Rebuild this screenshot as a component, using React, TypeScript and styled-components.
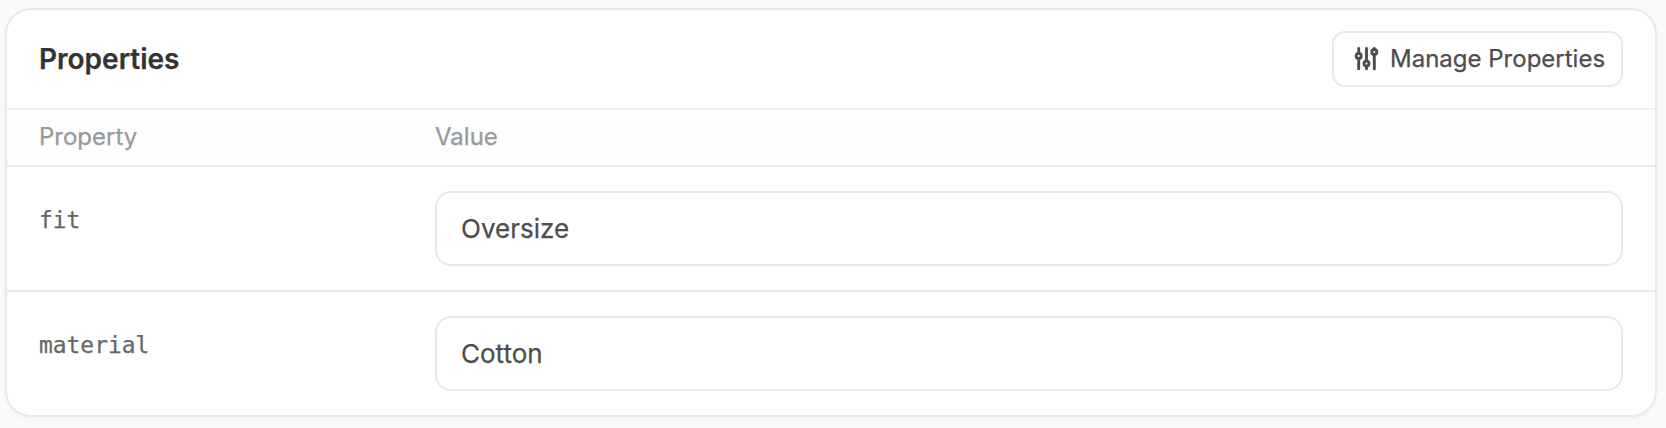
import React from "react";
import styled, { createGlobalStyle } from "styled-components";

const GlobalStyle = createGlobalStyle`
  *, *::before, *::after { box-sizing: border-box; }
  body {
    margin: 0;
    background: #fafafa;
    font-family: Inter, "Liberation Sans", sans-serif;
    -webkit-font-smoothing: antialiased;
    -webkit-text-stroke: 0.25px currentColor;
  }
`;

const Page = styled.main`
  height: 428px;
  padding: 8px 9px 11px 5px;
`;

const Card = styled.section`
  height: 409px;
  border: 2px solid #e9e9e9;
  border-radius: 26px;
  background: #fff;
  box-shadow: 0 2px 4px rgba(0, 0, 0, 0.03);
`;

const CardHeader = styled.header`
  display: flex;
  align-items: center;
  justify-content: space-between;
  height: 100px;
  padding: 0 32px;
  border-bottom: 2px solid #f2f2f2;
`;

const Title = styled.h2`
  margin: 0;
  font-size: 28px;
  line-height: 40px;
  font-weight: 600;
  color: #333;
`;

const Button = styled.button`
  display: flex;
  align-items: center;
  gap: 10px;
  width: 291px;
  height: 56px;
  margin-top: -1px;
  padding: 0 0 0 20px;
  border: 2px solid #e9e9e9;
  border-radius: 13px;
  background: #fff;
  color: #4d4d4d;
  font: 400 24px/32px Inter, sans-serif;
  white-space: nowrap;
`;

const Columns = styled.div`
  display: grid;
  grid-template-columns: 396px 1fr;
  padding: 0 32px;
`;

const TableHead = styled(Columns)`
  height: 57px;
  align-items: center;
  padding-bottom: 2px;
  border-bottom: 2px solid #e9e9e9;
  background:
    radial-gradient(circle at 24px 24px, #fdfdfd 24px, #fff 24.5px) 0 0 / 24px 24px no-repeat,
    radial-gradient(circle at 0 24px, #fdfdfd 24px, #fff 24.5px) 100% 0 / 24px 24px no-repeat,
    #fdfdfd;
`;

const HeadCell = styled.span`
  font-size: 24px;
  line-height: 32px;
  color: #999;
`;

const Row = styled(Columns)`
  padding-top: 24px;
  padding-bottom: 24px;

  & + & {
    border-top: 2px solid #e9e9e9;
  }
`;

const PropertyName = styled.span`
  padding-top: 13px;
  font: 400 22.9px/32px "DejaVu Sans Mono", monospace;
  color: #666;
`;

const ValueInput = styled.input`
  width: 100%;
  height: 75px;
  padding: 0 24px;
  border: 2px solid #e9e9e9;
  border-radius: 16px;
  outline: none;
  background: #fff;
  color: #4d4d4d;
  font: 400 26px/36px Inter, sans-serif;
`;

const SlidersIcon = () => (
  <svg width="26" height="26" viewBox="0 0 26 26" fill="none" stroke="currentColor" strokeWidth="2.9" strokeLinecap="round" aria-hidden="true">
    <path d="M4.7 2.5v4.6M4.7 12.7v10.2M12.5 2.5v12.3M12.5 20.4v2.5M20.3 2.5v.7M20.3 8.8v14.1" />
    <circle cx="4.7" cy="9.9" r="2.5" />
    <circle cx="12.5" cy="17.6" r="2.5" />
    <circle cx="20.3" cy="6" r="2.5" />
  </svg>
);

const properties = [
  { name: "fit", value: "Oversize" },
  { name: "material", value: "Cotton" },
];

export default function App() {
  return (
    <>
      <GlobalStyle />
      <Page>
        <Card>
          <CardHeader>
            <Title>Properties</Title>
            <Button type="button">
              <SlidersIcon />
              Manage Properties
            </Button>
          </CardHeader>
          <TableHead>
            <HeadCell>Property</HeadCell>
            <HeadCell>Value</HeadCell>
          </TableHead>
          {properties.map(({ name, value }) => (
            <Row key={name}>
              <PropertyName>{name}</PropertyName>
              <ValueInput aria-label={name} defaultValue={value} />
            </Row>
          ))}
        </Card>
      </Page>
    </>
  );
}
